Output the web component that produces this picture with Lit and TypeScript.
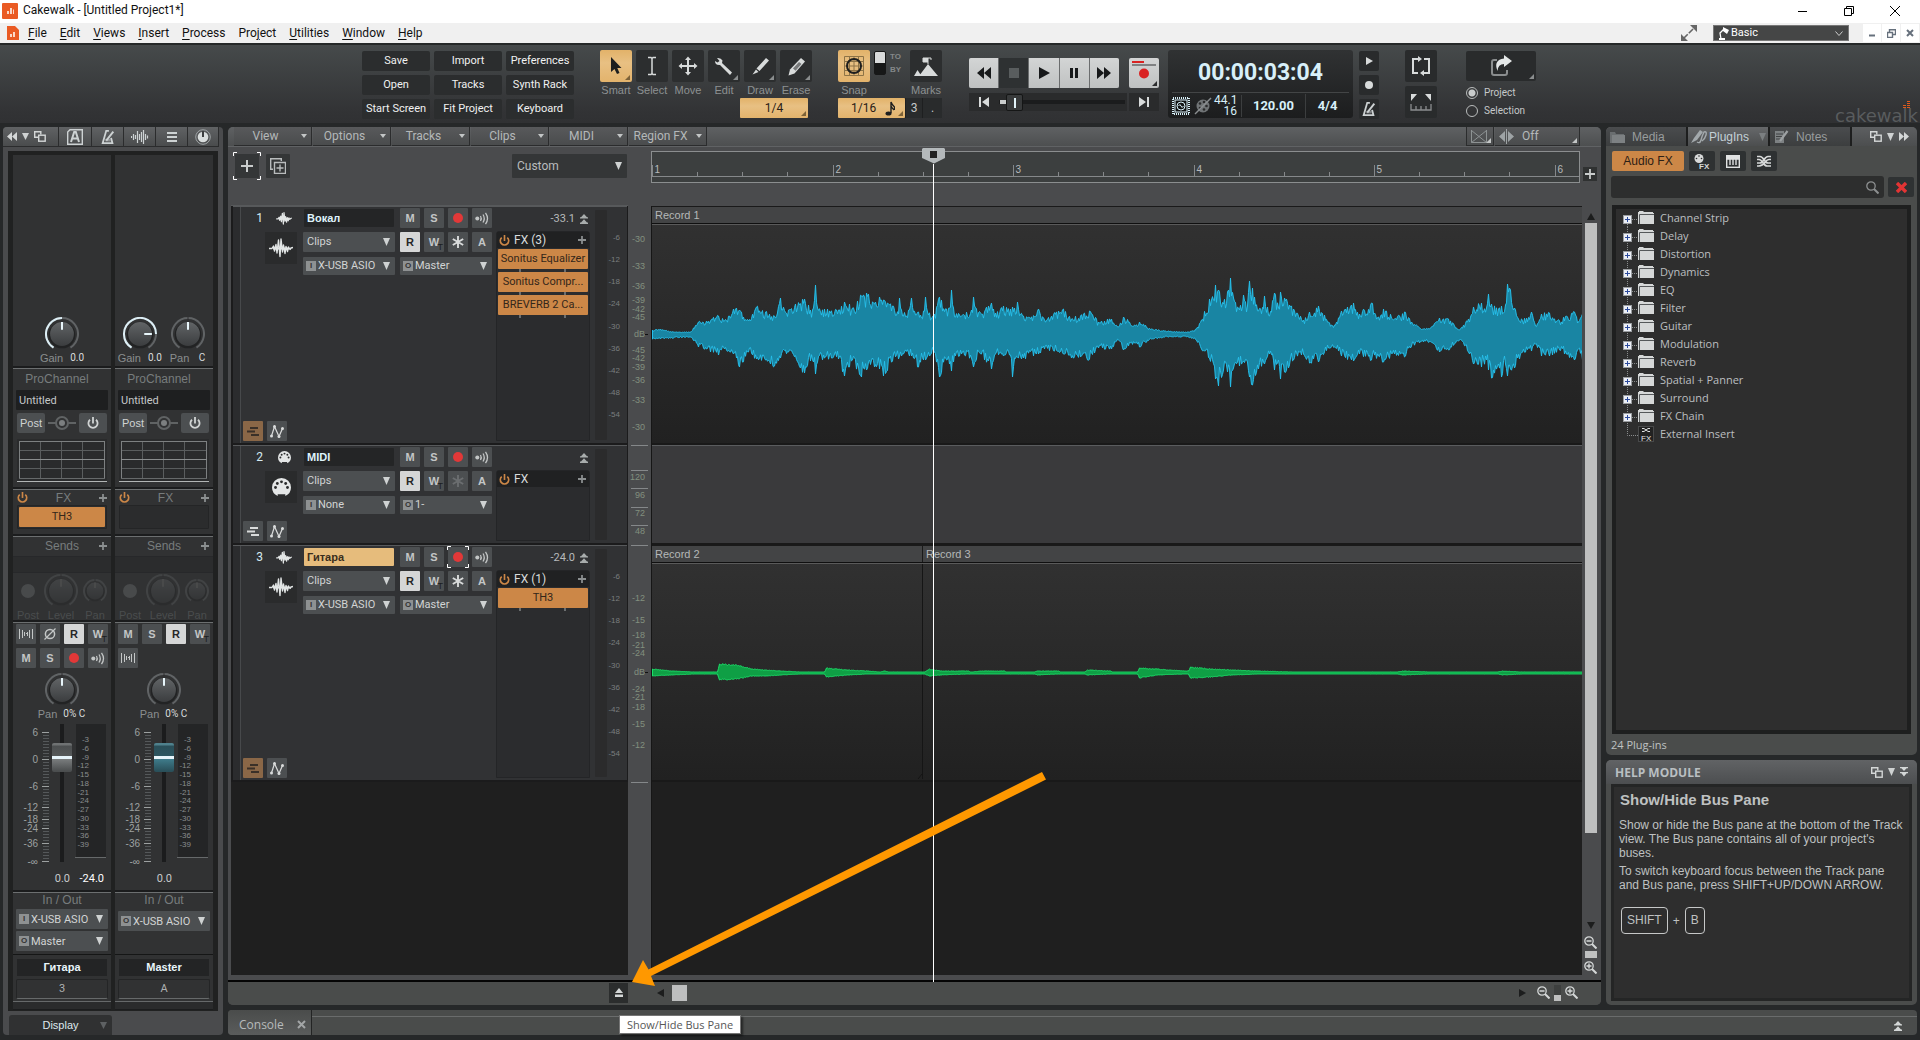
import { LitElement, html, svg, css, nothing } from "lit";
import { customElement, property } from "lit/decorators.js";
import { classMap } from "lit/directives/class-map.js";
import { styleMap } from "lit/directives/style-map.js";

/* ------------------------------------------------------------------ icons */

const tri = (w = 7, h = 8, color = "#cfd2d2") =>
  html`<svg class="ico" width=${w} height=${h} viewBox="0 0 8 8" preserveAspectRatio="none"><path d="M0 0H8L4 8Z" fill=${color} /></svg>`;
const triUp = (color = "#1c1d1d") =>
  html`<svg class="ico" width="8" height="7" viewBox="0 0 8 7"><path d="M0 7H8L4 0Z" fill=${color} /></svg>`;
const corner = (color = "#8a8d8e") =>
  html`<svg class="corner" width="5" height="5" viewBox="0 0 5 5"><path d="M5 0V5H0Z" fill=${color} /></svg>`;
const windows = () => html`<svg class="ico" width="12" height="11" viewBox="0 0 12 11"><g fill="none" stroke="#d4d7d7" stroke-width="1.4"><path d="M4 6.3H.7V.7H6.8V3.5" /><rect x="4.7" y="4.2" width="6.5" height="6" /></g></svg>`;
const chevrons = (dir: "left" | "right") => html`<svg class="ico" width="10" height="9" viewBox="0 0 10 9">${dir === "left"
  ? svg`<path d="M5 0V9L0 4.5ZM10 0V9L5 4.5Z" fill="#d4d7d7" />`
  : svg`<path d="M0 0V9L5 4.5ZM5 0V9L10 4.5Z" fill="#d4d7d7" />`}</svg>`;
const doubleUp = (color = "#a9adad", flip = false) => html`<svg class="ico" width="8" height="10" viewBox="0 0 8 10"><g fill=${color}>${flip
  ? svg`<path d="M0 0H8V1.2H6.6L4 4 1.4 1.2H0ZM0 5H8V6.2H6.6L4 9.5 1.4 6.2H0Z" />`
  : svg`<path d="M4 0 7 3.2H8V4.4H0V3.2H1ZM4 5.2 7 8.6H8V10H0V8.6H1Z" />`}</g></svg>`;
const metronome = (s = 18) => html`<svg class="ico" width=${s} height=${s} viewBox="0 0 18 18"><g fill="none" stroke="#cdd2d3" stroke-width="2"><path d="M10 2H7L3 16H14L12.500 10" /><path d="M7 13 15 3" stroke-width="2.200" /></g><path d="M6 11H12V14H6Z" fill="#cdd2d3" opacity=".5" /></svg>`;
const power = (color: string, s = 12) => html`<svg class="ico" width=${s} height=${s} viewBox="0 0 12 12"><path d="M3 2.800A4.600 4.600 0 1 0 9 2.800" fill="none" stroke=${color} stroke-width="1.800" /><path d="M6 0V6.500" stroke=${color} stroke-width="1.800" /></svg>`;
const plus = (s = 9, color = "#8b8f90", w = 2) => html`<svg class="ico" width=${s} height=${s} viewBox="0 0 9 9"><path d="M4.500 0V9M0 4.500H9" stroke=${color} stroke-width=${w} /></svg>`;
const recDot = () => html`<svg class="ico" width="10" height="10" viewBox="0 0 10 10"><circle cx="5" cy="5" r="5" fill="#e23838" /></svg>`;
const echo = () => html`<svg class="ico" width="14" height="13" viewBox="0 0 14 13"><circle cx="2.300" cy="6.500" r="2" fill="#c3c6c6" /><g fill="none" stroke="#c3c6c6" stroke-width="1.300"><path d="M5.500 4Q7 6.500 5.500 9" /><path d="M8 2.500Q10.500 6.500 8 10.500" /><path d="M10.500 .8Q14.500 6.500 10.500 12.200" /></g></svg>`;
const star = (color: string) => html`<svg class="ico" width="12" height="12" viewBox="0 0 12 12"><path d="M6 0V12M.8 3 11.200 9M11.200 3 .8 9" stroke=${color} stroke-width="1.900" /></svg>`;
const interleave = () => html`<svg class="ico" width="14" height="10" viewBox="0 0 14 10" shape-rendering="crispEdges"><path d="M.5 0V10M3.500 1V9M5.500 3V7M8.500 3V7M10.500 1V9M13.500 0V10" stroke="#c3c6c6" /><path d="M6.500 4.500H8" stroke="#c3c6c6" /></svg>`;
const phase = () => html`<svg class="ico" width="14" height="14" viewBox="0 0 14 14"><circle cx="7" cy="7" r="4.600" fill="none" stroke="#c3c6c6" stroke-width="1.500" /><path d="M1.500 12.500 12.500 1.500" stroke="#c3c6c6" stroke-width="1.300" /></svg>`;
const waveIcon = (w: number, h: number) => html`<svg class="ico" width=${w} height=${h} viewBox="0 0 24 20"><path d="M0 10.500 3 10.500 4.500 8 5.500 13 7 6.500 8 15 9.500 2 11 18.500 12 1 13.500 14 14.500 7 16 15.500 17 8.500 18.500 13.500 19.500 9 21 11.500 22 10 24 9.500" fill="none" stroke="#e2e5e5" stroke-width=${w > 20 ? 1.4 : 1.9} stroke-linejoin="round" /><path d="M4 9.500H20V11.500H4Z" fill="#e2e5e5" /></svg>`;
const midiIcon = (s: number) => html`<svg class="ico" width=${s} height=${s} viewBox="0 0 20 20"><path d="M10 0A10 10 0 0 1 20 10 10 10 0 0 1 14 19V17H6V19A10 10 0 0 1 0 10 10 10 0 0 1 10 0Z" fill="#e4e6e6" /><g fill="#2a2b2c"><circle cx="3.700" cy="10" r="1.500" /><circle cx="5.600" cy="5.800" r="1.500" /><circle cx="10" cy="4" r="1.500" /><circle cx="14.400" cy="5.800" r="1.500" /><circle cx="16.300" cy="10" r="1.500" /></g></svg>`;
const lanesIcon = (color: string) => html`<svg class="ico" width="12" height="9" viewBox="0 0 12 9"><path d="M3 1H11M0 4.500H8M4 8H12" stroke=${color} stroke-width="2" /></svg>`;
const autoIcon = () => html`<svg class="ico" width="14" height="13" viewBox="0 0 14 13"><path d="M1.500 11 4.500 1.500 9 11.500 12.500 3.500" fill="none" stroke="#d9dbdb" stroke-width="1.200" /><g fill="#d9dbdb"><circle cx="1.500" cy="11" r="1.500" /><circle cx="4.500" cy="1.500" r="1.500" /><circle cx="9" cy="11.500" r="1.500" /><circle cx="12.500" cy="3.500" r="1.500" /></g></svg>`;
const magnifier = (mark: "" | "+" | "-", color = "#d4d7d7") => html`<svg class="ico" width="13" height="13" viewBox="0 0 13 13"><circle cx="5" cy="5" r="4.200" fill="none" stroke=${color} stroke-width="1.300" /><path d="M8 8 12.500 12.500" stroke=${color} stroke-width="2" />${mark ? svg`<path d=${mark === "+" ? "M5 2.500V7.500M2.500 5H7.500" : "M2.500 5H7.500"} stroke=${color} stroke-width="1.400" />` : nothing}</svg>`;

const polar = (c: number, r: number, deg: number) => {
  const a = (deg * Math.PI) / 180;
  return `${(c + r * Math.sin(a)).toFixed(2)} ${(c - r * Math.cos(a)).toFixed(2)}`;
};
const arc = (c: number, r: number, from: number, to: number) =>
  `M${polar(c, r, from)}A${r} ${r} 0 ${to - from > 180 ? 1 : 0} 1 ${polar(c, r, to)}`;

/* A rotary knob; `lit` turns on the bright part of the ring up to the pointer. */
const knob = (size: number, angle = 0, lit = false, dim = false) => {
  const c = size / 2;
  const r = c - 1;
  return html`<svg class="ico" width=${size} height=${size} viewBox="0 0 ${size} ${size}" opacity=${dim ? 0.35 : 1}>
    <defs><linearGradient id="kb" x1="0" y1="0" x2="0" y2="1"><stop offset="0" stop-color="#616466" /><stop offset="1" stop-color="#3b3d3f" /></linearGradient></defs>
    <path d=${arc(c, r, -148, 148)} fill="none" stroke="#606365" stroke-width="2" />
    ${lit ? svg`<path d=${arc(c, r, -148, angle)} fill="none" stroke="#dceef5" stroke-width="2" />` : svg`<path d="M${c} 0V3" stroke="#2c2d2e" stroke-width="1" />`}
    <circle cx=${c} cy=${c + 1} r=${c * 0.78} fill="#222324" />
    <circle cx=${c} cy=${c} r=${c * 0.7} fill="url(#kb)" />
    <path d="M${polar(c, c * 0.7, angle)}L${polar(c, c * 0.25, angle)}" stroke=${dim ? "#777" : "#e8f6fb"} stroke-width="2" />
  </svg>`;
};

/* ----------------------------------------------------------- shared style */

const base = css`
  * { box-sizing: border-box; margin: 0; padding: 0; }
  :host { font-family: Roboto, "Open Sans", sans-serif; font-size: 11px; line-height: 14px; color: #c5c8c9; }
  button, select, input { font: inherit; color: inherit; border: 0; background: none; border-radius: 0; outline: 0; }
  select { appearance: none; min-width: 0; }
  .ico { display: block; flex: none; }
  .corner { position: absolute; right: 2px; bottom: 2px; }
  .sq { width: 20px; height: 20px; background: #4c4f51; border-radius: 1px; color: #c3c6c6; display: grid; place-items: center; font: bold 11px/20px "Liberation Sans", Arial, sans-serif; position: relative; }
  .sq.on { background: #d5d6d6; color: #252627; }
  .sq .t { position: absolute; right: 1px; bottom: 0; font: 9px/10px "Liberation Sans", Arial, sans-serif; color: #1c1d1e; }
  .combo { display: grid; background: #4c4f51; border-radius: 1px; align-items: center; min-width: 0; color: #d2d4d4; }
  .combo > * { grid-area: 1 / 1; }
  .combo select { width: 100%; height: 100%; padding-left: 4px; }
  .combo.tagged select { padding-left: 15px; }
  .combo .tag { width: 10px; height: 10px; margin-left: 3px; background: #8e9192; color: #333; font: bold 8px/10px "Liberation Sans", Arial, sans-serif; text-align: center; pointer-events: none; }
  .combo > svg { justify-self: end; margin-right: 5px; pointer-events: none; }
  .fxslot { background: #cc8747; color: #33261a; border-radius: 1px; height: 20px; display: block; width: 100%; text-align: center; white-space: nowrap; overflow: hidden; text-overflow: ellipsis; }
`;

const combo = (label: string, value: string, tag = "") => html`<span class=${classMap({ combo: true, tagged: !!tag })}>
  <select aria-label=${label}><option>${value}</option></select>
  ${tag ? html`<span class="tag">${tag}</span>` : nothing}${tri()}
</span>`;

/* ---------------------------------------------------------- channel strip */

const FADER_MARKS: [string, number][] = [["6", 8], ["0", 35], ["-6", 62], ["-12", 83], ["-18", 95], ["-24", 104], ["-36", 119], ["-∞", 137]];

@customElement("channel-strip")
class ChannelStrip extends LitElement {
  @property() name = "";
  @property() num = "";
  @property() effect = "";
  @property() peak = "";
  @property({ type: Boolean }) bus = false;

  static styles = [base, css`
    :host { display: flex; flex-direction: column; width: 98px; background: #313233; color: #8a8e8f; font-family: "Liberation Sans", Arial, sans-serif; }
    .val { font: 10px/14px Roboto, sans-serif; color: #d9dcdc; }
    .top { flex: 1; display: flex; align-items: flex-end; justify-content: center; gap: 8px; padding-bottom: 2px; }
    :host([bus]) .top { padding-right: 5px; }
    .kcol { display: grid; justify-items: center; row-gap: 1px; }
    .kcol .lab { display: flex; align-items: center; gap: 7px; height: 12px; }
    .sec { border-top: 2px solid #1b1c1d; box-shadow: inset 0 1px #6c6f70; position: relative; }
    .sec h3 { font-size: 12px; line-height: 14px; font-weight: normal; text-align: center; color: #777c7d; }
    .pro { height: 121px; padding: 4px 3px 0; }
    .pro h3 { padding-right: 10px; }
    .preset { width: 92px; height: 20px; background: #1e1f20; margin-top: 4px; padding-left: 3px; color: #c5c8c9; font: 11px Roboto, sans-serif; border-radius: 1px; }
    .postrow { display: flex; justify-content: space-between; align-items: center; padding: 3px 1px 6px; }
    .wide { width: 28px; height: 20px; background: #4c4f51; border-radius: 2px; display: grid; place-items: center; color: #d0d3d3; }
    .graph { display: block; margin-left: 1px; }
    .fx { height: 47px; padding: 1px 4px 0; }
    .row { display: flex; align-items: center; justify-content: space-between; height: 15px; }
    .rack { border: 1px solid #242526; background: #2b2c2d; height: 24px; padding: 1px; border-radius: 1px; }
    .fxslot { font: 11px/20px Roboto, sans-serif; }
    .snd { height: 86px; padding: 2px 4px 0; }
    .snd .row h3 { flex: 1; padding-left: 8px; }
    .slot { background: #2b2c2d; height: 17px; margin: 3px -4px 0; border-block: 1px solid #27282a; }
    .dim { display: grid; grid-template-columns: 22px 44px 24px; justify-items: center; align-items: center; color: #4a4d4e; height: 48px; }
    .dim svg { grid-row: 1; }
    .dim span { grid-row: 2; line-height: 9px; }
    .ctl { height: 270px; padding: 2px 3px 0; display: flex; flex-direction: column; }
    .grid { display: grid; grid-template-columns: repeat(4, 20px); grid-auto-rows: 20px; gap: 4px; height: 44px; }
    .pan { display: grid; justify-items: center; margin-top: 5px; padding-right: 1px; }
    .pan .lab { display: flex; gap: 6px; align-items: center; height: 13px; }
    .fader { display: grid; grid-template-columns: 34px 24px 34px; margin-top: 4px; height: 140px; }
    .fader text { font: 10px "Liberation Sans", Arial, sans-serif; fill: #9da1a1; }
    .fader .m text { font-size: 8px; fill: #8a8d8e; }
    .fader svg { display: block; overflow: visible; }
    input[type="range"] { appearance: none; writing-mode: vertical-lr; direction: rtl; width: 20px; height: 138px; margin: 0 auto; background: linear-gradient(90deg, transparent 8px, #1b1c1d 8px 12px, transparent 12px); }
    input[type="range"]::-webkit-slider-thumb { appearance: none; width: 20px; height: 29px; border-radius: 2px; background: linear-gradient(#6f7273 0 2px, #4c4f50 3px, #56595a 13px, #e6f4fa 13px 16px, #7a7d7e 16px, #4b4e4f 28px); }
    :host([bus]) input[type="range"]::-webkit-slider-thumb { background: linear-gradient(#4f818d 0 2px, #2a4f59 3px, #2d5661 13px, #e6f4fa 13px 16px, #3f7c8b 16px, #2a505a 28px); }
    .vals { display: grid; grid-template-columns: 58px 34px; text-align: right; margin-top: 8px; font: 11px/14px Roboto, sans-serif; color: #c8cbcb; }
    .vals span:first-child { padding-right: 4px; }
    .vals span:last-child { color: #fff; padding-right: 4px; }
    .io { height: 64px; padding: 1px 3px 0; display: flex; flex-direction: column; }
    .io .combo { height: 20px; margin-top: 2px; font: 11px Roboto, sans-serif; }
    :host([bus]) .io .combo { margin-top: 4px; }
    .nm { height: 54px; padding: 4px 3px 0; text-align: center; border-top: 1px solid #151616; box-shadow: none; }
    .nm b { display: block; margin: 0 1px; background: #232425; color: #e9f6fb; height: 17px; line-height: 17px; }
    .nm i { display: block; font: 11px/18px Roboto, sans-serif; height: 20px; border: 1px solid #242526; border-bottom-color: #66696a; margin-top: 3px; color: #aeb1b2; border-radius: 2px; }
    .nm hr { border: 0; border-top: 1px solid #66696a; margin: 2px -3px 0; height: 9px; background: #2a2b2c; border-bottom: 1px solid #1c1d1e; }
  `];

  private faderScale() {
    const ticks = [];
    for (let y = 8; y <= 137; y += 3) ticks.push(y);
    return html`<svg width="34" height="140">
      ${ticks.map((y) => svg`<path d="M27 ${y}.500H33" stroke="#55585a" />`)}
      ${FADER_MARKS.map(([t, y]) => svg`<path d="M26 ${y}.500H33" stroke="#9da1a1" /><text x="22" y=${y + 4} text-anchor="end">${t}</text>`)}
    </svg>`;
  }
  private meter() {
    return html`<svg class="m" width="34" height="140">
      <rect x="2" y="0" width="30" height="134" fill="#242526" /><path d="M1 133.500H32" stroke="#66696a" />
      ${Array.from({ length: 13 }, (_, i) => svg`<text x="15" y=${18 + Math.round(i * 8.75)} text-anchor="end">-${3 + i * 3}</text>`)}
    </svg>`;
  }

  render() {
    const b = this.bus;
    const r = html`<button class="sq on" aria-label="Read automation">R</button><button class="sq" aria-label="Write automation">W<span class="t">T</span></button>`;
    const m = html`<button class="sq">M</button><button class="sq">S</button>`;
    return html`
      <div class="top">
        <div class="kcol">${knob(34, b ? 90 : 0, true)}<div class="lab"><span>Gain</span><span class="val">0.0</span></div></div>
        ${b ? html`<div class="kcol">${knob(34)}<div class="lab"><span>Pan</span><span class="val">&nbsp;C</span></div></div>` : nothing}
      </div>
      <section class="sec pro">
        <h3>ProChannel</h3>
        <input class="preset" aria-label="ProChannel preset" .value=${"Untitled"} />
        <div class="postrow">
          <button class="wide">Post</button>
          <svg class="ico" width="28" height="14" viewBox="0 0 28 14"><path d="M0 7H8M20 7H28" stroke="#606364" stroke-width="2" /><circle cx="14" cy="7" r="6" fill="none" stroke="#606364" stroke-width="2" /><circle cx="14" cy="7" r="3" fill="#7c7f80" /></svg>
          <button class="wide" aria-label="ProChannel power">${power("#d0d3d3")}</button>
        </div>
        <svg class="graph" width="90" height="43" viewBox="0 0 90 43"><rect width="90" height="43" fill="#2a2b2c" /><g stroke="#5a5d5e"><path d="M23.500 2V40M44.500 2V40M65.500 2V40M2 11.500H88M2 29.500H88" /><path d="M2.500 2V40M87.500 2V40M2 2.500H88" stroke="#7d8081" /><path d="M2 20.500H88" stroke="#8a8d8e" /><path d="M2 39.500H88" stroke="#66696a" /><path d="M0 42.500H90" stroke="#b2b5b5" /></g></svg>
      </section>
      <section class="sec fx">
        <div class="row">${power("#cc8747", 11)}<h3>FX</h3><button aria-label="Add effect">${plus(8)}</button></div>
        <div class="rack">${this.effect ? html`<button class="fxslot">${this.effect}</button>` : nothing}</div>
      </section>
      <section class="sec snd">
        <div class="row"><h3>Sends</h3><button aria-label="Add send">${plus(8)}</button></div>
        <div class="slot"></div>
        <div class="dim"><svg class="ico" width="14" height="14"><circle cx="7" cy="7" r="7" fill="#484a4b" /></svg>${knob(34, 0, false, true)}${knob(24, 0, false, true)}<span>Post</span><span>Level</span><span>Pan</span></div>
      </section>
      <section class="sec ctl">
        <div class="grid">
          ${b
            ? html`${m}${r}<button class="sq" aria-label="Interleave">${interleave()}</button>`
            : html`<button class="sq" aria-label="Interleave">${interleave()}</button><button class="sq" aria-label="Phase">${phase()}</button>${r}${m}<button class="sq" aria-label="Arm for recording">${recDot()}</button><button class="sq" aria-label="Input echo">${echo()}</button>`}
        </div>
        <div class="pan">${knob(34)}<div class="lab"><span>Pan</span><span class="val">0% C</span></div></div>
        <div class="fader">${this.faderScale()}<input type="range" aria-label="${this.name} volume" min="0" max="100" .value=${"83"} />${this.meter()}</div>
        <div class="vals"><span>0.0</span><span>${this.peak}</span></div>
      </section>
      <section class="sec io">
        <h3>In / Out</h3>
        ${b ? combo("Output", "X-USB ASIO", "O") : html`${combo("Input", "X-USB ASIO", "I")}${combo("Output", "Master", "O")}`}
      </section>
      <section class="sec nm"><b>${this.name}</b><i>${this.num}</i><hr /></section>
    `;
  }
}

/* -------------------------------------------------------------- track row */

interface Track {
  num: number;
  name: string;
  midi?: boolean;
  selected?: boolean;
  input: string;
  output: string;
  peak?: string;
  fx: string[];
  height: number;
}

const TRACKS: Track[] = [
  { num: 1, name: "Вокал", input: "X-USB ASIO", output: "Master", peak: "-33.1", fx: ["Sonitus Equalizer", "Sonitus Compr...", "BREVERB 2 Ca..."], height: 239 },
  { num: 2, name: "MIDI", midi: true, input: "None", output: "1-", fx: [], height: 100 },
  { num: 3, name: "Гитара", selected: true, input: "X-USB ASIO", output: "Master", peak: "-24.0", fx: ["TH3"], height: 237 },
];

@customElement("track-row")
class TrackRow extends LitElement {
  @property({ attribute: false }) track!: Track;

  static styles = [base, css`
    :host { display: block; }
    .row { display: flex; height: 100%; background: #313234; border-left: 2px solid #1b1b1c; border-right: 1px solid #1b1b1c; border-bottom: 2px solid #1b1b1c; box-shadow: inset 0 1px #57595b; }
    .stripe { width: 8px; background: #2b2c2e; border-right: 1px solid #47494b; margin-top: 1px; }
    .main { width: 251px; display: flex; flex-direction: column; justify-content: space-between; padding: 2px 0 2px; }
    .grid { display: grid; grid-template: 20px 20px 19px / 24px 38px 92px 97px; row-gap: 4px; align-items: center; }
    .num { text-align: right; font-size: 12px; color: #d5eaf3; padding-right: 2px; }
    .kind { justify-self: center; }
    .thumb { grid-row: 2 / 4; grid-column: 1 / 3; justify-self: end; margin-right: 6px; width: 32px; height: 32px; background: #2a2b2c; display: grid; place-items: center; align-self: start; }
    .name { background: #242526; width: 90px; height: 18px; margin-left: 1px; padding-left: 3px; font: bold 11px "Liberation Sans", Arial, sans-serif; color: #dff3fb; border-radius: 1px; }
    .name.sel { background: #e6bc7c; color: #3a2e1c; }
    .g4 { display: grid; grid-template-columns: repeat(4, 20px); gap: 4px; margin-left: 5px; }
    .grid .combo { height: 20px; }
    .grid .combo.tagged { height: 18px; align-self: end; }
    .out { margin-left: 5px; width: 92px; display: grid; align-self: end; }
    .brackets .frame { position: absolute; left: -1px; top: -1px; }
    .lanes { display: flex; gap: 4px; padding-left: 2px; }
    .lanes .lit { background: #8a6747; }
    .fx { width: 94px; margin-left: 4px; display: flex; flex-direction: column; }
    .peak { height: 25px; display: flex; justify-content: flex-end; align-items: center; gap: 5px; padding-right: 2px; color: #b7babb; font-size: 11px; }
    .rack { flex: 1; background: #2b2c2e; border: 1px solid #242527; border-radius: 3px 3px 0 0; margin-bottom: 2px; }
    .rackhead { display: flex; align-items: center; gap: 4px; background: #202122; height: 16px; padding: 0 3px 0 2px; color: #d9dcdc; font-size: 12px; }
    .rackhead button { margin-left: auto; }
    .slot { padding: 0 1px 3px; background: linear-gradient(#6b6e6f, #6b6e6f) 22px 100% / 2px 3px no-repeat, linear-gradient(#6b6e6f, #6b6e6f) 67px 100% / 2px 3px no-repeat; }
    .rackhead + .slot { margin-top: 1px; }
    .meter { flex: 1; display: block; }
    text { font: 8px "Liberation Sans", Arial, sans-serif; fill: #7a7e7f; }
  `];

  render() {
    const t = this.track;
    return html`<div class="row">
      <div class="stripe"></div>
      <div class="main">
        <div class="grid">
          <span class="num">${t.num}</span>
          <span class="kind">${t.midi ? midiIcon(13) : waveIcon(16, 13)}</span>
          <input class=${classMap({ name: true, sel: !!t.selected })} aria-label="Track name" .value=${t.name} />
          <div class="g4">
            <button class="sq">M</button><button class="sq">S</button>
            <button class=${classMap({ sq: true, brackets: !!t.selected })} aria-label="Arm for recording">${recDot()}${t.selected ? html`<svg class="frame" width="22" height="22" viewBox="0 0 22 22"><path d="M4 .5H.5V4M18 .5H21.500V4M4 21.500H.5V18M18 21.500H21.500V18" fill="none" stroke="#fff" /></svg>` : nothing}</button>
            <button class="sq" aria-label="Input echo">${echo()}</button>
          </div>
          <span class="thumb">${t.midi ? midiIcon(19) : waveIcon(24, 20)}</span>
          ${combo("Edit filter", "Clips")}
          <div class="g4">
            <button class="sq on">R</button><button class="sq">W<span class="t">T</span></button>
            <button class="sq" aria-label="Freeze">${star(t.midi ? "#6b6e70" : "#d9dbdb")}</button><button class="sq">A</button>
          </div>
          ${combo("Input", t.input, "I")}
          <div class="out">${combo("Output", t.output, "O")}</div>
        </div>
        <div class="lanes">
          <button class=${classMap({ sq: true, lit: !t.midi })} aria-label="Take lanes">${lanesIcon(t.midi ? "#d9dbdb" : "#3a3028")}</button>
          <button class="sq" aria-label="Automation lanes">${autoIcon()}</button>
        </div>
      </div>
      <div class="fx">
        <div class="peak"><span>${t.peak ?? ""}</span>${doubleUp()}</div>
        <div class="rack">
          <div class="rackhead">${power("#cc8747", 11)}<span>FX${t.fx.length ? ` (${t.fx.length})` : ""}</span><button aria-label="Add effect">${plus(8)}</button></div>
          ${t.fx.map((f) => html`<div class="slot"><button class="fxslot">${f}</button></div>`)}
        </div>
      </div>
      <svg class="meter" width="37" height=${t.height - 3}>
        <rect x="5" y="4" width="12" height=${t.height - 9} rx="1" fill="#2b2b2c" />
        ${t.midi ? nothing : Array.from({ length: 9 }, (_, i) => svg`<text x="30" y=${34 + Math.round(i * 22.125)} text-anchor="end">-${6 + i * 6}</text>`)}
      </svg>
    </div>`;
  }
}

/* -------------------------------------------------------------- waveforms */

/* [x, upper peak, lower peak] in pixels from the clip start and its zero line */
const VOCAL: number[][] = [[0,4,5],[8,5,5],[21,2,4],[38,2,3],[46,12,13],[54,13,15],[66,18,21],[72,13,15],[81,25,20],[87,24,33],[96,13,18],[104,27,25],[113,22,26],[122,18,32],[128,36,24],[136,24,18],[152,35,39],[158,24,27],[161,26,28],[163,49,40],[165,26,28],[172,25,24],[186,24,25],[192,32,42],[200,26,26],[209,38,43],[214,41,36],[222,30,33],[227,37,35],[231,34,42],[240,28,27],[246,20,25],[247,36,22],[249,24,22],[257,24,22],[259,36,22],[261,22,24],[266,22,33],[271,23,26],[273,37,26],[275,22,22],[282,20,18],[287,37,43],[294,25,26],[297,26,30],[299,44,37],[301,26,28],[309,18,20],[319,24,24],[321,37,33],[324,25,25],[329,20,20],[339,31,35],[343,21,20],[351,28,22],[358,25,21],[360,27,43],[362,26,24],[365,32,23],[371,18,24],[384,18,20],[386,25,20],[392,14,15],[406,23,17],[411,25,20],[419,15,24],[437,23,25],[446,12,14],[459,15,15],[466,7,6],[471,17,16],[482,9,9],[487,12,13],[499,5,5],[516,3,3],[529,2,3],[536,2,3],[544,5,6],[549,14,15],[557,35,24],[563,49,45],[566,44,52],[571,30,36],[575,42,38],[578,56,53],[581,36,34],[587,24,32],[591,39,27],[595,28,28],[597,53,43],[600,46,51],[606,23,35],[612,38,30],[617,18,20],[622,41,36],[626,26,26],[628,42,45],[630,28,30],[632,36,38],[641,25,26],[651,14,20],[657,22,29],[666,28,28],[676,12,14],[682,9,13],[689,23,22],[701,31,27],[707,20,20],[719,31,26],[726,17,22],[731,25,28],[742,15,20],[752,22,23],[759,12,12],[771,5,8],[779,7,8],[787,16,18],[796,15,16],[807,4,6],[816,15,18],[821,27,30],[829,31,33],[834,26,26],[836,40,36],[838,27,30],[839,30,44],[846,25,30],[849,28,43],[853,29,30],[855,50,42],[858,44,35],[862,26,34],[870,13,18],[879,22,17],[883,8,10],[889,20,22],[897,21,22],[907,13,16],[914,18,20],[922,22,26],[926,12,15],[930,20,26],[1400,16,18]];
const GUITAR: number[][] = [[0,4,3],[20,2,2],[42,1,1],[65,1,1],[67,9,7],[84,8,6],[100,4,3],[112,3,3],[148,1,1],[172,1,1],[174,5,4],[196,3,2],[215,2,1],[228,1,1],[232,2,1],[236,1,1],[272,1,1],[277,4,3],[288,2,2],[316,2,1],[318,1,1],[330,2,1],[352,2,1],[354,1,1],[382,1,1],[385,2,2],[406,2,1],[408,1,1],[432,1,1],[435,3,2],[458,2,1],[460,1,1],[485,1,1],[487,5,5],[505,4,2],[532,2,1],[536,2,1],[538,6,5],[560,4,4],[580,3,2],[606,2,1],[640,1,1],[745,1,1],[750,2,2],[778,1,1],[845,1,1],[850,2,2],[870,1,1],[1400,1,1]];

const noise = (i: number) => {
  const s = Math.sin(i * 127.1 + 31.7) * 43758.5453;
  return s - Math.floor(s);
};
const wavePath = (pts: number[][], mid: number, rough: number) => {
  const top: string[] = [];
  const bottom: string[] = [];
  let k = 0;
  for (let x = 0; x < 1400; x++) {
    while (k < pts.length - 2 && pts[k + 1][0] <= x) k++;
    const [x0, u0, d0] = pts[k];
    const [x1, u1, d1] = pts[k + 1];
    const f = (x - x0) / (x1 - x0);
    const edge = x === x0;
    const nu = edge ? 1 : 1.06 - rough * noise(x);
    const nd = edge ? 1 : 1.06 - rough * noise(x + 5000);
    top.push(`${x}.5 ${(mid - Math.max(1, (u0 + (u1 - u0) * f) * nu)).toFixed(1)}`);
    bottom.push(`${x}.5 ${(mid + Math.max(1, (d0 + (d1 - d0) * f) * nd)).toFixed(1)}`);
  }
  return `M${top.join("L")}L${bottom.reverse().join("L")}Z`;
};
const VOCAL_PATH = wavePath(VOCAL, 109, 0.4);
const GUITAR_PATH = wavePath(GUITAR, 109, 0.2);

const BAR = 180.5;
const PLAYHEAD_BAR = 1.5568;

@customElement("clips-view")
class ClipsView extends LitElement {
  static styles = [base, css`
    :host { display: block; background: #1f1f1f; border-left: 1px solid #161616; overflow: hidden; min-width: 0; }
    .lane { overflow: hidden; border-bottom: 2px solid #191919; }
    .audio { border-top: 1px solid #1a1a1a; display: flex; flex-direction: column; background: linear-gradient(#323232, #212121); }
    .heads { display: flex; height: 17px; background: #434445; border-bottom: 1px solid #0f0f0f; box-shadow: 0 1px #5a5a5a; font: 11px/16px "Liberation Sans", Arial, sans-serif; color: #b5b8b8; flex: none; }
    .heads span { padding-left: 3px; }
    .heads .first { width: 270px; }
    .heads .next { border-left: 1px solid #1a1a1a; }
    .midi { background: #3a3a3c; border-top: 1px solid #5a5c5e; }
    svg { display: block; margin-top: 1px; }
  `];
  render() {
    const [a, b, c] = TRACKS.map((t) => styleMap({ height: `${t.height}px` }));
    return html`
      <div class="lane audio" style=${a}>
        <div class="heads"><span>Record 1</span></div>
        <svg width="100%" height="217"><path d=${VOCAL_PATH} fill="#1985a3" stroke="#26bfea" /></svg>
      </div>
      <div class="lane midi" style=${b}></div>
      <div class="lane audio" style=${c}>
        <div class="heads"><span class="first">Record 2</span><span class="next">Record 3</span></div>
        <svg width="100%" height="215"><path d="M270.500 0V215M266 215 270 210" stroke="#151515" fill="none" /><path d=${GUITAR_PATH} fill="#0f9f45" stroke="#1be069" /></svg>
      </div>`;
  }
}

/* -------------------------------------------------------------- side dock */

const PLUGIN_FOLDERS = ["Channel Strip", "Delay", "Distortion", "Dynamics", "EQ", "Filter", "Guitar", "Modulation", "Reverb", "Spatial + Panner", "Surround", "FX Chain"];

@customElement("side-dock")
class SideDock extends LitElement {
  static styles = [base, css`
    :host { display: flex; flex-direction: column; gap: 5px; min-height: 0; }
    .panel { background: #4a4c4b; border-radius: 5px; overflow: hidden; display: flex; flex-direction: column; }
    .browser { flex: 1; min-height: 0; }
    .tabs { display: grid; grid-template-columns: 82px 82px 82px 1fr; height: 19px; background: linear-gradient(#5d5f61, #4c4e4f); flex: none; font: 12px/18px "Liberation Sans", Arial, sans-serif; color: #989c9d; }
    .tabs button { display: flex; align-items: center; gap: 7px; padding-left: 4px; background: linear-gradient(#4a4c4e, #3c3e3f); border-right: 2px solid #1d1e1e; }
    .tabs button.cur { background: linear-gradient(#66686a, #4c4e4f); color: #c3d0d6; gap: 2px; padding-left: 2px; }
    .tabs button.cur svg:last-child { margin-left: 8px; }
    .tools { display: flex; align-items: center; justify-content: flex-end; gap: 5px; padding-right: 8px; }
    .kinds { display: flex; gap: 5px; padding: 5px 6px 0; }
    .kinds button { width: 26px; height: 20px; background: #2e3132; border-radius: 2px; display: grid; place-items: center; }
    .kinds button.cur { width: 72px; background: #cc8747; color: #2d2015; font: 12px "Liberation Sans", Arial, sans-serif; }
    .search { display: flex; gap: 4px; padding: 5px 3px 0 5px; }
    .box { flex: 1; height: 22px; background: #2d2e2e; border-radius: 3px; display: flex; align-items: center; padding-right: 5px; }
    .box input { flex: 1; min-width: 0; }
    .search button { width: 26px; height: 20px; margin-top: 1px; background: #2f3233; border-radius: 2px; display: grid; place-items: center; }
    .tree { flex: 1; margin: 7px 6px 0; border: 4px solid #1e1f1f; background: #2e2e2e; list-style: none; padding: 0 0 0 7px; font: 11px/17px "Open Sans", "Noto Sans", sans-serif; color: #bcbfc0; min-height: 0; overflow: hidden; }
    .tree li { display: flex; height: 18px; align-items: flex-start; }
    .tree svg { flex: none; }
    .tree span { padding-left: 5px; }
    .count { padding: 4px 5px 3px; height: 21px; font: 11px/14px "Open Sans", "Noto Sans", sans-serif; color: #bfc2c2; }
    .help { height: 245px; }
    .help header { display: flex; align-items: center; gap: 5px; height: 24px; padding: 0 9px 0 9px; background: linear-gradient(#616365, #4c4e50); }
    .help h2 { flex: 1; font: bold 12px/24px "Open Sans", "Noto Sans", sans-serif; color: #b9bfc2; padding-top: 1px; }
    .doc { flex: 1; margin: 0 5px 4px; border: 3px solid #242525; background: #2e2e2e; padding: 4px 5px; font: 12px/14px "Liberation Sans", Arial, sans-serif; color: #bfc1c1; }
    .doc h1 { font: bold 15px/17px "Liberation Sans", Arial, sans-serif; margin: 0 0 10px 1px; }
    .doc p { margin-bottom: 4px; }
    .keys { display: flex; align-items: center; gap: 5px; padding: 11px 0 0 2px; }
    kbd { border: 1px solid #c6c8c8; border-radius: 4px; height: 27px; line-height: 25px; padding: 0 5px; font-family: inherit; }
  `];
  render() {
    return html`
      <section class="panel browser">
        <nav class="tabs">
          <button><svg class="ico" width="15" height="12" viewBox="0 0 15 12"><path d="M0 1H5L6 3H14V12H0Z" fill="#6a6e70" /><path d="M2 4H15V12H2Z" fill="#7d8183" /></svg>Media</button>
          <button class="cur"><svg class="ico" width="17" height="15" viewBox="0 0 17 15"><path d="M1 14 4 9 10 1 13 3 7 11 3 13Z" fill="#a3a9ac" /><path d="M7 13Q10 15 11 11T14 3Q17 2 16 6T12 12" fill="none" stroke="#a3a9ac" stroke-width="1.400" /></svg>PlugIns${tri(7, 8, "#7b7f81")}</button>
          <button><svg class="ico" width="15" height="14" viewBox="0 0 15 14"><path d="M1 1H10V13H1Z" fill="#7d8183" /><path d="M2 4H9M2 6.500H8M2 9H7" stroke="#3f4142" /><path d="M13.500 1 6 11" stroke="#9da1a3" stroke-width="2.200" /></svg>Notes</button>
          <div class="tools">${windows()}${tri()}${chevrons("right")}</div>
        </nav>
        <div class="kinds">
          <button class="cur">Audio FX</button>
          <button aria-label="MIDI FX"><svg class="ico" width="16" height="15" viewBox="0 0 16 15"><circle cx="5" cy="4.500" r="4.500" fill="#d8dada" /><g fill="#2e3132"><circle cx="2.500" cy="4.500" r=".8" /><circle cx="5" cy="2" r=".8" /><circle cx="7.500" cy="4.500" r=".8" /></g><text x="5" y="15" font-size="8" font-weight="bold" font-family="Liberation Sans, sans-serif" fill="#d8dada">FX</text></svg></button>
          <button aria-label="Instruments"><svg class="ico" width="14" height="13" viewBox="0 0 14 13"><rect x=".7" y=".7" width="12.600" height="11.600" fill="none" stroke="#e0e2e2" stroke-width="1.400" /><path d="M1 1H13V4H1ZM4 4V10M7 4V10M10 4V10" fill="#e0e2e2" stroke="#e0e2e2" stroke-width="1.400" /></svg></button>
          <button aria-label="ReWire"><svg class="ico" width="14" height="12" viewBox="0 0 14 12"><path d="M0 1.500H3C7 1.500 7 8 11 8H14M0 4.500H2C6 4.500 6 11 10 11H14M0 8H3C7 8 7 1.500 11 1.500H14M0 11H2C8 11 8 4.500 12 4.500H14" fill="none" stroke="#d8dada" stroke-width="1.700" /></svg></button>
        </div>
        <div class="search">
          <label class="box"><input type="text" aria-label="Search plug-ins" />${magnifier("", "#8c8f90")}</label>
          <button aria-label="Clear search"><svg class="ico" width="11" height="11" viewBox="0 0 11 11"><path d="M1 1 10 10M10 1 1 10" stroke="#e23434" stroke-width="3.400" /></svg></button>
        </div>
        <ul class="tree">
          ${PLUGIN_FOLDERS.map((f, i) => html`<li><svg width="32" height="18" viewBox="0 0 32 18"><path d="M4.500 ${i ? 0 : 9}V18M9 10.500H15" stroke="#8a8d8e" stroke-dasharray="1 1" /><rect x=".5" y="6.500" width="8" height="8" fill="#eceff6" stroke="#9a9da0" /><path d="M2 10.500H7M4.500 8V13" stroke="#2c4a9c" /><path d="M15 4V15H31V4H30V3H21L20 2H16V3H15Z" fill="#d6d8d8" /><path d="M16.500 15V5.500H31" fill="none" stroke="#55585a" /></svg><span>${f}</span></li>`)}
          <li><svg width="32" height="18" viewBox="0 0 32 18"><path d="M4.500 0V10.500H15" stroke="#8a8d8e" stroke-dasharray="1 1" fill="none" /><rect x="15.500" y="1.500" width="15" height="15" fill="#222" stroke="#48494a" /><path d="M19 3.500H21L25 6.500H27M19 6.500H21L25 3.500H27" stroke="#dcdede" fill="none" /><text x="18" y="15.500" font-size="8" font-family="Liberation Sans, sans-serif" fill="#e4e6e6">FX</text></svg><span>External Insert</span></li>
        </ul>
        <div class="count">24 Plug-ins</div>
      </section>
      <section class="panel help">
        <header><h2>HELP MODULE</h2>${windows()}${tri()}${doubleUp("#d4d7d7", true)}</header>
        <div class="doc">
          <h1>Show/Hide Bus Pane</h1>
          <p>Show or hide the Bus pane at the bottom of the Track view. The Bus pane contains all of your project's buses.</p>
          <p>To switch keyboard focus between the Track pane and Bus pane, press SHIFT+UP/DOWN ARROW.</p>
          <div class="keys"><kbd>SHIFT</kbd><span>+</span><kbd>B</kbd></div>
        </div>
      </section>`;
  }
}

/* ---------------------------------------------------------------- toolbar */

const light = "#d8dbdb";
const TOOLS: [string, unknown, boolean][] = [
  ["Smart", svg`<path d="M11 7V22L14.500 19 17 24 19.500 23 17.300 18H21.500Z" fill="#1e1f1f" />`, true],
  ["Select", svg`<path d="M12 7.500H15L16 8.500 17 7.500H20M16 8.500V23.500M12 24.500H15L16 23.500 17 24.500H20" fill="none" stroke="#d8dbdb" stroke-width="1.500" />`, false],
  ["Move", svg`<path d="M16 9V23M9 16H23" stroke="#d8dbdb" stroke-width="2" /><path d="M16 6.500 19 10H13ZM16 25.500 19 22H13ZM6.500 16 10 13V19ZM25.500 16 22 13V19Z" fill="#d8dbdb" />`, false],
  ["Edit", svg`<path d="M9 8Q13 7.500 14.500 10.500L14 13 24 22.500 22 25 12 15Q7 15.500 7 11L9.500 12.500 11.500 11Z" fill="#d8dbdb" />`, true],
  ["Draw", svg`<path d="M22 8 25 10.500 15.500 21 12.500 18.500ZM12 19.500 14.500 22 8.500 24.500Z" fill="#d8dbdb" />`, true],
  ["Erase", svg`<path d="M21 8 25 11.500 14.500 23.500 8.500 25.500 10 19.500Z" fill="#d8dbdb" /><path d="M13 18.500 19 12 21.500 14 15.500 20.800Z" fill="#77797a" />`, true],
];

@customElement("control-bar")
class ControlBar extends LitElement {
  static styles = [base, css`
    :host { display: block; }
    .bar { display: flex; height: 80px; padding: 5px 2px 0 362px; border-top: 2px solid #262929; background: linear-gradient(#464a4b, #323335 85%, #303133); overflow: hidden; }
    .mods { display: grid; grid-template-columns: repeat(3, 68px); gap: 4px; grid-auto-rows: 20px; padding-top: 1px; }
    .mods button { background: #2b2d2e; border-radius: 2px; color: #f0f1f1; }
    .tools { margin-left: 26px; display: grid; grid-template-columns: repeat(6, 32px); column-gap: 4px; align-content: start; }
    .lab { font: 11px/16px "Liberation Sans", Arial, sans-serif; color: #8d9192; text-align: center; height: 16px; }
    .tool { width: 32px; height: 32px; background: #2c2e2f; border-radius: 2px; position: relative; display: block; }
    .tool.on, .amber { background: linear-gradient(#e2b269, #e8c083 40%, #e3b36c); color: #2a2015; }
    .tool > svg:first-child { display: block; }
    .amber { height: 20px; position: relative; border-radius: 1px; font-size: 12px; }
    .res { grid-column: 4 / 7; width: 68px; margin-left: 32px; }
    .snap { margin-left: 26px; display: grid; grid-template-columns: 32px 36px 32px; column-gap: 2px; align-content: start; width: 104px; }
    .toby { display: flex; gap: 4px; align-items: center; padding-left: 2px; font: bold 8px/13px "Liberation Sans", Arial, sans-serif; color: #85898a; height: 24px; margin-top: 1px; }
    .sw { width: 12px; height: 24px; background: linear-gradient(#d9dbdb 50%, #171818 50%); border: 1px solid #171818; border-radius: 2px; }
    .trio { grid-column: 1 / 4; display: grid; grid-template-columns: 67px 17px 20px; width: 104px; }
    .trio .dk { background: #292b2c; border-left: 1px solid #1e1f20; height: 20px; font-size: 12px; color: #c5c8c9; }
    .trio .amber { display: flex; align-items: center; padding-left: 13px; gap: 9px; }
    .snap .lab.m { grid-column: 3; }
    .transport { margin-left: 27px; display: grid; grid-template-columns: 150px 30px; column-gap: 10px; row-gap: 5px; padding-top: 8px; align-content: start; width: 190px; }
    .keys { display: grid; grid-template-columns: repeat(5, 1fr); column-gap: 1px; background: #6b6d6e; border-radius: 2px; overflow: hidden; height: 30px; }
    .keys button, .rec { background: linear-gradient(#d3d5d5, #bfc1c1); display: grid; place-items: center; }
    .keys button.off { background: #2e3132; }
    .rec { position: relative; border-radius: 2px; height: 30px; }
    .pos { display: flex; align-items: center; height: 18px; background: #2a2b2c; padding-left: 10px; gap: 10px; width: 158px; }
    .pos input { appearance: none; width: 126px; height: 18px; background: linear-gradient(#c9cccc, #c9cccc) 1px 50% / 6px 4px no-repeat, linear-gradient(#1b1c1d, #1b1c1d) 0 50% / 100% 4px no-repeat; }
    .pos input::-webkit-slider-thumb { appearance: none; width: 17px; height: 17px; border-radius: 2px; background: linear-gradient(90deg, transparent 7px, #e3f4fa 7px 9px, transparent 9px) 0 3px / 100% 10px no-repeat, #383a3b; border: 1px solid #151616; }
    .end { background: #2a2b2c; height: 18px; display: grid; place-items: center; }
    .lcd { margin-left: 9px; width: 185px; height: 68px; border-radius: 3px; background: linear-gradient(#303233, #1c1d1e); padding: 0 4px; }
    .time { font: bold 23px/42px Roboto, sans-serif; color: #d8f0f9; text-align: center; border-bottom: 1px solid #434546; height: 43px; padding-top: 2px; }
    .facts { display: grid; grid-template-columns: 22px 20px 28px 64px 43px; align-items: center; height: 25px; font: bold 13px/24px Roboto, sans-serif; color: #d8f0f9; text-align: center; }
    .facts .rate { font: 12px/11px Roboto, sans-serif; text-align: right; padding-right: 4px; }
    .facts span { border-right: 1px solid #3c3e3f; }
    .facts span:last-child { border: 0; }
    .minis { margin-left: 6px; display: grid; grid-auto-rows: 20px; gap: 4px; width: 20px; padding-top: 1px; align-content: start; }
    .dkb { background: #292b2c; border-radius: 2px; display: grid; place-items: center; position: relative; }
    .loops { margin-left: 26px; display: grid; grid-template-rows: 32px 32px; row-gap: 4px; width: 32px; align-content: start; }
    .export { margin-left: 29px; width: 76px; padding-top: 1px; font: 10px/18px Roboto, sans-serif; color: #c5c8c9; }
    .export .dkb { width: 70px; height: 30px; margin-bottom: 3px; }
    .export label { display: flex; gap: 6px; align-items: center; height: 18px; }
    .export input { appearance: none; width: 12px; height: 12px; border: 1px solid #b9bcbc; border-radius: 50%; }
    .export input:checked { background: radial-gradient(#c9cccc 3px, transparent 4px); }
    .brand { margin-left: auto; align-self: end; display: flex; flex-direction: column; align-items: flex-end; color: #595c5e; font: 18px/14px "DejaVu Sans", Inter, sans-serif; }
    .brand svg { margin-right: 8px; }
  `];
  render() {
    const ic = (p: unknown, w = 16) => html`<svg class="ico" width=${w} height="14" viewBox="0 0 16 14">${p}</svg>`;
    return html`<div class="bar">
      <div class="mods">${["Save", "Import", "Preferences", "Open", "Tracks", "Synth Rack", "Start Screen", "Fit Project", "Keyboard"].map((m) => html`<button>${m}</button>`)}</div>
      <div class="tools">
        ${TOOLS.map(([n, p, c], i) => html`<button class=${classMap({ tool: true, on: i === 0 })} aria-label=${n}><svg width="32" height="32" viewBox="0 0 32 32">${p}</svg>${c ? corner(i ? "#8a8d8e" : "#7d6238") : nothing}</button>`)}
        ${TOOLS.map(([n]) => html`<span class="lab">${n}</span>`)}
        <button class="amber res">1/4${corner("#7d6238")}</button>
      </div>
      <div class="snap">
        <button class="tool on" aria-label="Snap"><svg width="32" height="32" viewBox="0 0 32 32"><path d="M6.500 6.500H25.500V25.500H6.500ZM11.500 6V26M16 6V26M20.500 6V26M6 11.500H26M6 16H26M6 20.500H26" fill="none" stroke="#8d7346" /><circle cx="16" cy="16" r="7" fill="none" stroke="#1e1f1f" stroke-width="2" /></svg></button>
        <div class="toby"><span class="sw"></span><span>TO<br />BY</span></div>
        <button class="tool" aria-label="Marks"><svg width="32" height="32" viewBox="0 0 32 32"><path d="M18 14 28 26H9ZM7.500 20 11.500 26H4Z" fill="#d8dbdb" /><path d="M18 14V8H13V12H18" fill="#d8dbdb" stroke="#d8dbdb" /><path d="M18 8H21V10" fill="none" stroke="#d8dbdb" /></svg></button>
        <span class="lab">Snap</span><span class="lab m">Marks</span>
        <div class="trio"><button class="amber">1/16<svg class="ico" width="10" height="15" viewBox="0 0 10 15"><ellipse cx="3.500" cy="12.500" rx="3" ry="2" fill="#1e1f1f" /><path d="M6 12V1Q7 4 9.500 6V9M6 5Q7 7 9 9" fill="none" stroke="#1e1f1f" stroke-width="1.400" /></svg>${corner("#7d6238")}</button><button class="dk">3</button><button class="dk">.</button></div>
      </div>
      <div class="transport">
        <div class="keys">
          <button aria-label="Rewind">${ic(svg`<path d="M8 1V13L1 7ZM15 1V13L8 7Z" fill="#17191a" />`)}</button>
          <button class="off" aria-label="Stop">${ic(svg`<rect x="3" y="2" width="10" height="10" fill="#595d5e" />`)}</button>
          <button aria-label="Play">${ic(svg`<path d="M3 1V13L14 7Z" fill="#17191a" />`)}</button>
          <button aria-label="Pause">${ic(svg`<path d="M4 2H7V12H4ZM9 2H12V12H9Z" fill="#17191a" />`)}</button>
          <button aria-label="Fast forward">${ic(svg`<path d="M1 1V13L8 7ZM8 1V13L15 7Z" fill="#17191a" />`)}</button>
        </div>
        <button class="rec" aria-label="Record"><svg class="ico" width="30" height="30" viewBox="0 0 30 30"><path d="M3 4H15" stroke="#d92323" stroke-width="2" /><path d="M3 7H27" stroke="#6d6f70" stroke-width="1.600" /><circle cx="15" cy="15.500" r="5" fill="#d92323" /></svg>${corner("#2c2d2e")}</button>
        <div class="pos"><svg class="ico" width="10" height="10" viewBox="0 0 10 10"><path d="M0 0H2V10H0ZM10 0V10L3 5Z" fill=${light} /></svg><input type="range" aria-label="Song position" min="0" max="100" .value=${"6"} /></div>
        <button class="end" aria-label="Go to end"><svg class="ico" width="10" height="10" viewBox="0 0 10 10"><path d="M8 0H10V10H8ZM0 0V10L7 5Z" fill=${light} /></svg></button>
      </div>
      <div class="lcd">
        <div class="time">00:00:03:04</div>
        <div class="facts">
          <svg class="ico" width="18" height="18" viewBox="0 0 18 18"><rect x="1" y="1" width="16" height="16" fill="none" stroke="#d8f0f9" stroke-width="2" stroke-dasharray="1 1" /><rect x="3" y="3" width="12" height="12" fill="#101112" stroke="#d8f0f9" /><circle cx="9" cy="9" r="4" fill="none" stroke="#d8f0f9" /><path d="M6.500 9Q8 6 9 9T11.500 9" fill="none" stroke="#d8f0f9" /></svg>
          <svg class="ico" width="18" height="18" viewBox="0 0 18 18"><circle cx="9" cy="9" r="6.500" fill="#707476" /><g fill="#2a2b2c"><circle cx="6" cy="6.500" r="1.300" /><circle cx="10" cy="5" r="1.300" /><circle cx="12.500" cy="9" r="1.300" /><circle cx="6" cy="11" r="1.300" /><circle cx="10" cy="12.500" r="1.300" /></g><path d="M1 17 17 1" stroke="#8a8e90" stroke-width="1.500" /></svg>
          <span class="rate">44.1<br />16</span><span>120.00</span><span>4/4</span>
        </div>
      </div>
      <div class="minis">
        <button class="dkb" aria-label="Play state"><svg class="ico" width="7" height="8" viewBox="0 0 7 8"><path d="M0 0 7 4 0 8Z" fill=${light} /></svg></button>
        <button class="dkb" aria-label="Record state"><svg class="ico" width="8" height="8"><circle cx="4" cy="4" r="4" fill=${light} /></svg></button>
        <button class="dkb" aria-label="Metronome">${metronome(16)}</button>
      </div>
      <div class="loops">
        <button class="dkb" aria-label="Loop"><svg class="ico" width="20" height="20" viewBox="0 0 20 20"><path d="M5 3H2V17H7M15 17H18V3H13" fill="none" stroke=${light} stroke-width="2" /><path d="M4 3H8M12 17H16" stroke=${light} stroke-width="2" /><path d="M7 0 11 3 7 6ZM13 14 9 17 13 20Z" fill=${light} /></svg></button>
        <button class="dkb" aria-label="Punch"><svg class="ico" width="22" height="18" viewBox="0 0 22 18"><path d="M1 1H7L1 8ZM15 1H21V8Z" fill=${light} /><path d="M1 11V17H21V11M6 13V17M11 13V17M16 13V17" fill="none" stroke="#8a8d8e" stroke-width="1.300" /></svg></button>
      </div>
      <div class="export">
        <button class="dkb" aria-label="Export"><svg class="ico" width="24" height="22" viewBox="0 0 24 22"><path d="M8 5H5Q3 5 3 7V18Q3 20 5 20H16Q18 20 18 18V15" fill="none" stroke="#8a8d8e" stroke-width="2" /><path d="M15 0 23 6 15 12V9Q9 9 8.500 16 4 5 15 3.500Z" fill="#e4e7e7" /></svg>${corner()}</button>
        <label><input type="radio" name="scope" checked />Project</label>
        <label><input type="radio" name="scope" />Selection</label>
      </div>
      <div class="brand"><svg class="ico" width="7" height="8" viewBox="0 0 7 8"><path d="M0 4H3V5H0ZM0 6H3V7H0ZM4 0H7V1H4ZM4 2H7V3H4ZM4 4H7V5H4ZM4 6H7V7H4Z" fill="#e05a1c" /></svg><span>cakewalk</span></div>
    </div>`;
  }
}

/* ------------------------------------------------------------- root shell */

const VIEW_MENUS = ["View", "Options", "Tracks", "Clips", "MIDI", "Region FX"];
const DB_SCALE: [string, number][] = [["-30", 33], ["-33", 60], ["-36", 80], ["-39", 94], ["-42", 103], ["-45", 111], ["dB", 128], ["-45", 144], ["-42", 152], ["-39", 161], ["-36", 174], ["-33", 194], ["-30", 221], ["120", 271], ["96", 289], ["72", 307], ["48", 325], ["-12", 392], ["-15", 414], ["-18", 429], ["-21", 439], ["-24", 447], ["dB", 466], ["-24", 483], ["-21", 491], ["-18", 501], ["-15", 518], ["-12", 539]];

@customElement("app-root")
class AppRoot extends LitElement {
  static styles = [base, css`
    :host { display: flex; flex-direction: column; height: 100vh; min-height: 1000px; background: #262829; overflow: hidden; position: relative; }
    .title { height: 23px; background: #fff; color: #111; display: flex; align-items: center; padding: 0 14px 2px 2px; font: 12px/19px Roboto, sans-serif; flex: none; }
    .title .txt { flex: 1; padding-left: 5px; }
    .title button { width: 46px; height: 19px; display: grid; place-items: center; }
    .title button:last-child { width: 22px; margin-left: 12px; }
    .menu { height: 20px; background: #f0f0f0; color: #111; display: flex; align-items: center; font: 12px/18px Roboto, sans-serif; flex: none; padding-left: 7px; }
    .menu a { color: inherit; text-decoration: none; margin-left: 13px; }
    .menu a:first-of-type { margin-left: 9px; }
    .menu u { text-underline-offset: 2px; }
    .ws { margin-left: auto; display: flex; align-items: center; gap: 16px; }
    .ws .combo { width: 136px; height: 16px; background: #454646; color: #fff; border: 1px solid #777; border-radius: 0; }
    .ws .combo select { padding-left: 17px; font-size: 11px; line-height: 14px; }
    .ws .combo .lamp { justify-self: start; margin-left: 4px; }
    .mdi { display: flex; gap: 1px; margin: 0 1px 0 -2px; }
    .mdi button { width: 18px; height: 18px; background: #fff; display: grid; place-items: center; }
    .body { flex: 1; min-height: 0; display: grid; grid-template: minmax(0, 1fr) 25px / 220px minmax(0, 1fr) 311px; gap: 5px; padding: 4px 3px 5px; }
    .mixer { grid-row: 1 / 3; background: #4a4b4d; border-radius: 4px; display: flex; flex-direction: column; overflow: hidden; }
    .mtabs { display: grid; grid-template-columns: 56px 33px 32px 32px 32px 31px 1fr; height: 20px; background: linear-gradient(#606264, #4a4c4d); border-bottom: 1px solid #2b2c2d; flex: none; margin-right: 4px; }
    .mtabs > * { display: flex; align-items: center; justify-content: center; gap: 5px; border-right: 1px solid #2b2c2d; }
    .mtabs > span { padding-right: 8px; }
    .strips { flex: 1; min-height: 0; margin: 4px 5px 0; padding: 4px 5px 3px; background: #202121; display: flex; gap: 4px; width: 210px; }
    .disp { height: 20px; margin: 4px 0 0 6px; width: 103px; background: #303132; color: #dfe9ed; display: flex; align-items: center; justify-content: center; gap: 21px; padding-left: 28px; border-radius: 3px 3px 0 0; font: 11px "Liberation Sans", Arial, sans-serif; }
    .view { background: #4a4b4d; border-radius: 5px; overflow: hidden; display: flex; flex-direction: column; position: relative; }
    .vbar { height: 20px; flex: none; display: flex; padding-left: 6px; background: linear-gradient(#5f6163, #4d4f50); border-bottom: 1px solid #606264; color: #b4b8b9; font-size: 12px; }
    .vbar button { width: 78px; height: 19px; margin-right: 1px; display: flex; align-items: center; background: linear-gradient(#58595b, #4a4c4d); border: solid #2b2c2d; border-width: 0 1px 1px 0; }
    .vbar button span { flex: 1; text-align: center; white-space: nowrap; padding-right: 4px; }
    .vbar button svg.ico { margin-right: 4px; }
    .vbar .fade { margin-left: auto; width: 28px; padding-left: 4px; position: relative; border-left-width: 1px; }
    .vbar .off { width: 85px; margin-right: 21px; padding-left: 4px; gap: 4px; position: relative; }
    .canvas { flex: 1; min-height: 0; display: grid; grid-template: 59px minmax(0, 1fr) 5px / 400px 23px minmax(0, 1fr) 19px; }
    .add { display: flex; gap: 7px; padding: 7px 0 0 7px; align-items: flex-start; }
    .add button { width: 24px; height: 24px; background: #343637; display: grid; place-items: center; border-radius: 1px; position: relative; }
    .add button:first-child svg + svg { position: absolute; left: -2px; top: -2px; }
    .add .combo { width: 115px; height: 24px; margin-left: auto; margin-right: 1px; background: #343637; color: #b9bcbd; }
    .add .combo select { padding-left: 5px; font-size: 12px; }
    .ruler { grid-column: 3; margin-top: 4px; height: 32px; border: 1px solid #8b8e8f; background: #3c3f3f; overflow: hidden; margin-right: 2px; }
    .ruler svg { display: block; }
    .ruler text { font: 10px "Liberation Sans", Arial, sans-serif; fill: #b7babb; }
    .addm { grid-column: 4; width: 14px; height: 14px; background: #2f3131; display: grid; place-items: center; margin: 20px 0 0 1px; }
    .panes { grid-row: 2; grid-column: 1; margin-left: 3px; background: #1f1f1f; border-top: 1px solid #57595b; margin-top: -1px; overflow: hidden; }
    .scale { grid-row: 2; grid-column: 2; display: block; }
    .scale text { font: 9px "Liberation Sans", Arial, sans-serif; fill: #82907f; }
    clips-view { grid-row: 2; grid-column: 3; }
    .vs { grid-row: 2; grid-column: 4; display: flex; flex-direction: column; align-items: center; padding: 7px 4px 1px 2px; gap: 1px; }
    .vs i { width: 12px; flex: 1; background: #bebfbf; margin: 2px 0 88px; }
    .vs .z { width: 12px; height: 7px; background: #c0c1c1; margin: 1px 0 2px; }
    .vs .gap { height: 5px; }
    .foot { height: 25px; border-top: 2px solid #050505; background: #4a4c4b; display: flex; align-items: center; flex: none; padding-bottom: 2px; }
    .bus { width: 19px; height: 20px; background: #2b2d2d; margin-left: 381px; display: grid; place-items: center; }
    .foot .thumb { width: 15px; height: 16px; background: #bebfbf; margin-left: 8px; }
    .foot .left { margin-left: 29px; }
    .foot .tail { margin-left: auto; display: flex; gap: 4px; align-items: center; padding-right: 23px; }
    .foot .tail i { width: 7px; height: 16px; background: linear-gradient(#3d3f3e 10px, #bebfbf 10px); }
    .foot .tail svg:first-child { margin-right: 7px; }
    .play { position: absolute; top: 21px; bottom: 23px; width: 23px; pointer-events: none; display: flex; flex-direction: column; align-items: center; }
    .play i { flex: 1; width: 1px; background: #fff; }
    .console { grid-column: 2 / 4; background: #4a4c4b; border-radius: 4px; display: flex; overflow: hidden; }
    .console button.tab { width: 84px; display: flex; align-items: center; gap: 13px; padding: 3px 0 0 11px; font: 12px "Open Sans", "Noto Sans", sans-serif; color: #b7babb; background: linear-gradient(#4a4c4b, #5a5c5c); border-right: 1px solid #232424; }
    .console .rest { flex: 1; margin-top: 6px; border-top: 1px solid #6a6c6c; display: flex; align-items: center; justify-content: flex-end; padding-right: 15px; }
    .tip { position: absolute; left: 619px; top: 1015px; height: 19px; width: 122px; text-align: center; background: #fff; border: 1px solid #767676; box-shadow: 2px 2px 2px rgba(0, 0, 0, 0.5); color: #575757; font: 11px/17px "Open Sans", "Noto Sans", sans-serif; white-space: nowrap; }
    .arrow { position: absolute; left: 630px; top: 768px; pointer-events: none; }
  `];

  private ruler() {
    return html`<svg width="100%" height="30">
      <path d="M0 24.500H3000" stroke="#85888a" />
      ${Array.from({ length: 21 }, (_, i) => {
        const x = Math.round((i * BAR) / 4) + 0.5;
        return i % 4
          ? svg`<path d="M${x} 20V24" stroke="#85888a" />`
          : svg`<path d="M${x} 13V24" stroke="#85888a" /><text x=${x + 2} y="21">${i / 4 + 1}</text>`;
      })}</svg>`;
  }

  render() {
    const caret = html`<svg class="ico" width="6" height="4" viewBox="0 0 6 4"><path d="M0 0H6L3 4Z" fill="#c3c6c6" /></svg>`;
    return html`
      <header class="title">
        <svg class="ico" width="16" height="16" viewBox="0 0 16 16"><rect width="16" height="16" rx="1" fill="#ea5b24" /><path d="M5 8H7V11H5ZM8 5H10V11H8ZM11 6.500H12V11H11Z" fill="#fbd9c8" /></svg>
        <span class="txt">Cakewalk - [Untitled Project1*]</span>
        <button aria-label="Minimize"><svg width="10" height="10"><path d="M0 5.500H9" stroke="#000" /></svg></button>
        <button aria-label="Restore"><svg width="10" height="10" fill="none" stroke="#000"><path d="M.5 2.500H7.500V9.500H.5ZM2.500 2V.5H9.500V7.500H8" /></svg></button>
        <button aria-label="Close"><svg width="10" height="10"><path d="M0 0 10 10M10 0 0 10" stroke="#000" /></svg></button>
      </header>
      <nav class="menu">
        <svg class="ico" width="12" height="14" viewBox="0 0 12 14"><path d="M0 0H8L12 4V14H0Z" fill="#ea5b24" /><path d="M3 8H5V11H3ZM6 6H8V11H6Z" fill="#fbd9c8" /></svg>
        <a href="#"><u>F</u>ile</a><a href="#"><u>E</u>dit</a><a href="#"><u>V</u>iews</a><a href="#"><u>I</u>nsert</a><a href="#"><u>P</u>rocess</a><a href="#">Pro<u>j</u>ect</a><a href="#"><u>U</u>tilities</a><a href="#"><u>W</u>indow</a><a href="#"><u>H</u>elp</a>
        <div class="ws">
          <svg class="ico" width="16" height="16" viewBox="0 0 16 16"><path d="M2.500 13.500 13.500 2.500" stroke="#666" stroke-width="1.600" stroke-dasharray="6 1.500" /><path d="M9 0H16V7ZM0 9V16H7Z" fill="#666" /></svg>
          <span class="combo"><select aria-label="Workspace"><option>Basic</option></select><svg class="ico lamp" width="12" height="13" viewBox="0 0 12 13"><path d="M3 12 2 6 6 2" fill="none" stroke="#fff" stroke-width="1.300" /><path d="M5 0 11 3 9 7 5 4ZM1 11H7V13H1Z" fill="#fff" /></svg><svg width="8" height="5" viewBox="0 0 8 5"><path d="M.5 .5 4 4.500 7.500 .5" fill="none" stroke="#ccc" /></svg></span>
          <div class="mdi">
            <button aria-label="Minimize project"><svg width="8" height="8"><path d="M1 6.500H7" stroke="#66707c" stroke-width="2" /></svg></button>
            <button aria-label="Restore project"><svg width="9" height="9" fill="none" stroke="#66707c"><path d="M.5 3.500H5.500V8.500H.5ZM2.500 3V.8H8.500V5.500H6" stroke-width="1.400" /></svg></button>
            <button aria-label="Close project"><svg width="8" height="8"><path d="M1 1 7 7M7 1 1 7" stroke="#66707c" stroke-width="2" /></svg></button>
          </div>
        </div>
      </nav>
      <control-bar></control-bar>
      <div class="body">
        <aside class="mixer">
          <div class="mtabs">
            <span>${chevrons("left")}${tri(7, 7)}${windows()}</span>
            <button aria-label="Arpeggiator"><svg class="ico" width="16" height="16" viewBox="0 0 16 16"><path d="M.7 3 3 .7H15.300V15.300H.7Z" fill="none" stroke="#cdd2d3" stroke-width="1.400" /><path d="M4 13 7.200 3H8.800L12 13M5 9.500H11" fill="none" stroke="#cdd2d3" stroke-width="2" /></svg></button>
            <button aria-label="Metronome">${metronome(16)}</button>
            <button aria-label="Audio"><svg class="ico" width="18" height="14" viewBox="0 0 18 14"><path d="M.5 6V8M2.500 4V10M4.500 5V9M6.500 1V13M8.500 4V10M10.500 2V12M12.500 0V14M14.500 4V10M16.500 5.500V8.500" stroke="#cdd2d3" stroke-width="1.200" /></svg></button>
            <button aria-label="List"><svg class="ico" width="10" height="12"><path d="M0 2H10M0 6H10M0 10H10" stroke="#cdd2d3" stroke-width="2" /></svg></button>
            <button aria-label="Knobs"><svg class="ico" width="16" height="16" viewBox="0 0 16 16"><circle cx="8" cy="8" r="7.300" fill="none" stroke="#9ea3a5" /><circle cx="8" cy="8" r="5.300" fill="#d9dddd" /><path d="M8 2V8" stroke="#3c3e40" stroke-width="2" /></svg></button>
          </div>
          <div class="strips">
            <channel-strip name="Гитара" num="3" effect="TH3" peak="-24.0"></channel-strip>
            <channel-strip bus name="Master" num="A"></channel-strip>
          </div>
          <button class="disp">Display${tri(7, 7, "#5e6163")}</button>
        </aside>
        <main class="view">
          <div class="vbar">
            ${VIEW_MENUS.map((m) => html`<button><span>${m}</span>${caret}</button>`)}
            <button class="fade" aria-label="Crossfade"><svg class="ico" width="16" height="13" viewBox="0 0 16 13"><path d="M.5 0V12.500H15.500V0M.5 .5 15.500 12.500M15.500 .5 .5 12.500" fill="none" stroke="#8d9293" /></svg>${corner("#c3c6c6")}</button>
            <button class="off"><svg class="ico" width="15" height="15" viewBox="0 0 15 15"><path d="M6 2V13L0 7.500ZM9 2V13L15 7.500ZM7 0H8V15H7Z" fill="#9ea3a5" /></svg>Off${corner("#c3c6c6")}</button>
          </div>
          <div class="canvas">
            <div class="add">
              <button aria-label="Add track">${plus(12, "#c9cccc", 1.5)}<svg class="ico" width="28" height="28" viewBox="0 0 28 28"><path d="M4 .5H.5V4M24 .5H27.500V4M4 27.500H.5V24M24 27.500H27.500V24" fill="none" stroke="#fff" /></svg></button>
              <button aria-label="Duplicate track"><svg class="ico" width="16" height="16" viewBox="0 0 16 16"><path d="M3 11.300H.7V.7H11.300V3" fill="none" stroke="#b9bcbd" stroke-width="1.400" /><path d="M4.500 4.500H15.500V15.500H4.500ZM10 6.500V13.500M6.500 10H13.500" fill="none" stroke="#b9bcbd" stroke-width="1.400" /></svg></button>
              ${combo("Track control preset", "Custom")}
            </div>
            <div class="ruler">${this.ruler()}</div>
            <button class="addm" aria-label="Add marker">${plus(10, "#c9cccc", 1.6)}</button>
            <div class="panes">${TRACKS.map((t) => html`<track-row .track=${t} style=${styleMap({ height: `${t.height}px` })}></track-row>`)}</div>
            <svg class="scale" width="23" height="600">
              ${DB_SCALE.map(([t, y]) => svg`<text x="17" y=${y + 3} text-anchor="end">${t}</text>`)}
              ${[239, 264, 282, 301, 319, 339, 576].map((y) => svg`<path d="M3 ${y}.500H20" stroke="#85888a" />`)}
              <path d="M17 128.500H20M17 466.500H20" stroke="#111" />
            </svg>
            <clips-view></clips-view>
            <div class="vs">${triUp()}<i></i>${tri(8, 7, "#1c1d1d")}<span class="gap"></span>${magnifier("-")}<span class="z"></span>${magnifier("+")}</div>
          </div>
          <div class="foot">
            <button class="bus" aria-label="Show/Hide Bus Pane"><svg class="ico" width="8" height="9" viewBox="0 0 8 9"><path d="M4 0 8 5H0ZM0 6.500H8V9H0Z" fill="#d4d7d7" /></svg></button>
            <svg class="ico left" width="7" height="8" viewBox="0 0 7 8"><path d="M7 0V8L0 4Z" fill="#1c1d1d" /></svg>
            <span class="thumb"></span>
            <div class="tail"><svg class="ico" width="7" height="8" viewBox="0 0 7 8"><path d="M0 0V8L7 4Z" fill="#1c1d1d" /></svg>${magnifier("-")}<i></i>${magnifier("+")}</div>
          </div>
          <div class="play" style=${styleMap({ left: `${Math.round(413 + PLAYHEAD_BAR * BAR)}px` })}>
            <svg class="ico" width="23" height="16" viewBox="0 0 23 16"><path d="M1 0H22L23 1V10L12 15.500 0 10V1Z" fill="#b4b9bb" /><rect x="8" y="3" width="7" height="7" fill="#222" /></svg><i></i>
          </div>
        </main>
        <side-dock></side-dock>
        <div class="console">
          <button class="tab">Console<svg class="ico" width="9" height="9"><path d="M1 1 8 8M8 1 1 8" stroke="#a3a6a7" stroke-width="2" /></svg></button>
          <div class="rest">${doubleUp("#d4d7d7")}</div>
        </div>
      </div>
      <svg class="arrow" width="420" height="220" viewBox="630 768 420 220"><path d="M1042 772 1046 779.500 651 976 655 986 632 982 643 960 648.500 969.500Z" fill="#ff9800" /></svg>
      <div class="tip" role="tooltip">Show/Hide Bus Pane</div>`;
  }
}
